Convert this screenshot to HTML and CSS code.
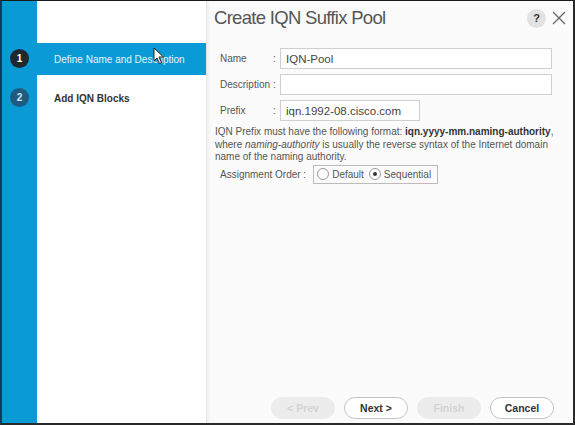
FILE: index.html
```html
<!DOCTYPE html>
<html lang="en">
<head>
    <meta charset="UTF-8">
    <title>Create IQN Suffix Pool</title>
    <link rel="stylesheet" href="styles.css">
</head>
<body>
    <div class="wizard">
        <div class="rail">
            <div class="step-num active-num">1</div>
            <div class="step-num">2</div>
        </div>
        <div class="steps">
            <div class="step active">Define Name and Description</div>
            <div class="step">Add IQN Blocks</div>
            <svg class="cursor" width="12" height="18" viewBox="0 0 12 18">
                <path d="M1 1 L1 14 L4 11 L6.5 16.5 L8.5 15.5 L6 10 L10.5 10 Z" fill="#fff" stroke="#222" stroke-width="1"/>
            </svg>
        </div>
        <div class="main">
            <header>
                <h1>Create IQN Suffix Pool</h1>
                <div class="tools">
                    <span class="help">?</span>
                    <svg class="close" width="14" height="14" viewBox="0 0 14 14">
                        <path d="M1 1 L13 13 M13 1 L1 13" stroke="#666" stroke-width="1.3"/>
                    </svg>
                </div>
            </header>
            <div class="form">
                <div class="row">
                    <label>Name</label><span class="colon">:</span>
                    <input class="wide" value="IQN-Pool">
                </div>
                <div class="row">
                    <label>Description</label><span class="colon">:</span>
                    <input class="wide" value="">
                </div>
                <div class="row">
                    <label>Prefix</label><span class="colon">:</span>
                    <input class="short" value="iqn.1992-08.cisco.com">
                </div>
                <p class="hint">IQN Prefix must have the following format: <b>iqn.yyyy-mm.naming-authority</b>, where <i>naming-authority</i> is usually the reverse syntax of the Internet domain name of the naming authority.</p>
                <div class="row order">
                    <label class="order-label">Assignment Order :</label>
                    <div class="radios">
                        <span class="radio"></span>Default
                        <span class="radio checked"></span>Sequential
                    </div>
                </div>
            </div>
            <footer>
                <button class="btn disabled">&lt; Prev</button>
                <button class="btn">Next &gt;</button>
                <button class="btn disabled">Finish</button>
                <button class="btn">Cancel</button>
            </footer>
        </div>
    </div>
</body>
</html>
```

FILE: styles.css
```css
body {
    margin: 0;
    font-family: "Liberation Sans", Arial, sans-serif;
    background: #fff;
}
.wizard {
    width: 575px;
    height: 425px;
    box-sizing: border-box;
    border: 1px solid #1a1a1a;
    border-left: 2px solid #143a5c;
    border-right: 2px solid #2a2a2a;
    border-bottom: 2px solid #2a2a2a;
    display: flex;
}
.rail {
    width: 35px;
    background: #0a9ad6;
    display: flex;
    flex-direction: column;
    align-items: center;
    padding-top: 48px;
    gap: 20px;
}
.step-num {
    width: 19px;
    height: 19px;
    border-radius: 50%;
    background: #1f5b80;
    color: #d8e8f2;
    font-size: 10px;
    font-weight: bold;
    display: flex;
    align-items: center;
    justify-content: center;
}
.step-num.active-num {
    background: #20272d;
    color: #fff;
}
.steps {
    width: 169px;
    background: #fff;
    padding-top: 42px;
    position: relative;
    border-right: 1px solid #e6e6e6;
    box-shadow: 2px 0 3px rgba(0, 0, 0, 0.05);
}
.step {
    height: 32px;
    padding-left: 17px;
    display: flex;
    align-items: center;
    font-size: 10px;
    color: #333;
    font-weight: bold;
    margin-bottom: 7px;
}
.step.active {
    background: #0a9ad6;
    color: #e4f4fb;
    font-weight: normal;
}
.cursor {
    position: absolute;
    left: 116px;
    top: 46px;
}
.main {
    flex: 1;
    background: #fbfbfb;
    display: flex;
    flex-direction: column;
    padding: 0 18px 4px 8px;
}
header {
    display: flex;
    justify-content: space-between;
    align-items: center;
    height: 34px;
    margin-bottom: 13px;
}
h1 {
    margin: 0;
    margin-left: -1px;
    font-size: 18.5px;
    letter-spacing: -0.7px;
    font-weight: normal;
    color: #555;
}
.tools {
    display: flex;
    align-items: center;
    gap: 6px;
    margin-right: -11px;
}
.help {
    width: 19px;
    height: 19px;
    border-radius: 50%;
    background: #e2e2e2;
    color: #333;
    font-size: 11px;
    font-weight: bold;
    display: flex;
    align-items: center;
    justify-content: center;
}
.row {
    display: flex;
    align-items: center;
    margin-bottom: 5px;
    font-size: 10px;
    color: #555;
}
.row label {
    width: 53px;
    padding-left: 5px;
}
.colon {
    width: 7px;
}
input {
    height: 21px;
    box-sizing: border-box;
    border: 1px solid #cfcfcf;
    background: #fff;
    font-family: "Liberation Sans", Arial, sans-serif;
    font-size: 11.5px;
    color: #444;
    padding: 0 5px;
}
input.wide {
    width: 272px;
}
input.short {
    width: 140px;
}
.hint {
    margin: 0 -14px 0 0;
    font-size: 10px;
    line-height: 12.5px;
    color: #555;
}
.hint b {
    color: #333;
}
.order {
    margin-top: 1px;
}
.order-label {
    width: auto !important;
    margin-right: 7px;
}
.radios {
    border: 1px solid #bbb;
    height: 17px;
    width: 121px;
    display: flex;
    align-items: center;
    padding-left: 2px;
    font-size: 10px;
    color: #555;
}
.radio {
    width: 10px;
    height: 10px;
    border: 1px solid #999;
    border-radius: 50%;
    background: #fff;
    margin-right: 3px;
    margin-left: 1px;
    position: relative;
}
.radio.checked {
    margin-left: 5px;
}
.radio.checked::after {
    content: "";
    position: absolute;
    left: 3px;
    top: 3px;
    width: 4px;
    height: 4px;
    border-radius: 50%;
    background: #333;
}
footer {
    margin-top: auto;
    display: flex;
    justify-content: flex-end;
    gap: 9px;
    margin-right: 1px;
}
.btn {
    width: 64px;
    height: 22px;
    border-radius: 11px;
    border: 1px solid #c4c4c4;
    background: #fff;
    font-family: "Liberation Sans", Arial, sans-serif;
    font-size: 10.5px;
    font-weight: bold;
    color: #333;
}
.btn.disabled {
    background: #ececec;
    border-color: #ececec;
    color: #d4d4d4;
}
```
